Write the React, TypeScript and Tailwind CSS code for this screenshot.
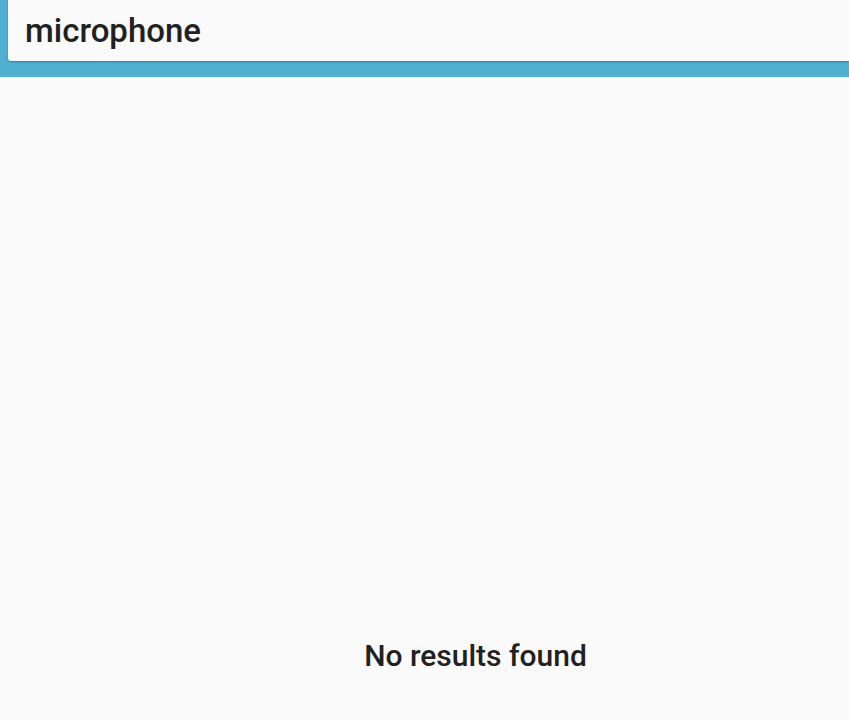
export default function App() {
  return (
    <div className="flex h-[720px] w-[849px] flex-col bg-[#fafafa] font-['Roboto',sans-serif] text-[#212121]">
      <div className="bg-[#4fb0d2] pb-4 pl-2">
        <div className="flex h-[61px] items-center rounded-bl-[3px] bg-[#fafafa] pl-[17px] shadow-[0_1px_2px_rgba(0,0,0,0.3)]">
          <span className="text-[33px] font-medium leading-none">microphone</span>
        </div>
      </div>
      <div className="flex flex-1 items-end justify-center pb-[42px] pl-[102px]">
        <span className="text-[30px] font-medium">No results found</span>
      </div>
    </div>
  );
}
